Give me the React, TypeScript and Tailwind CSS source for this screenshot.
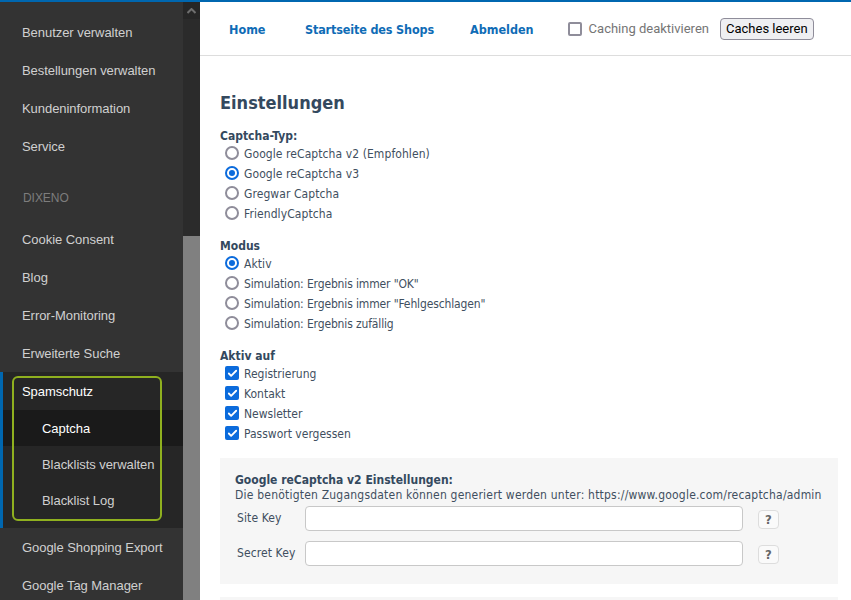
import { Check } from "lucide-react";

const topItems = ["Benutzer verwalten", "Bestellungen verwalten", "Kundeninformation", "Service"];
const dixenoItems = ["Cookie Consent", "Blog", "Error-Monitoring", "Erweiterte Suche"];
const subItems = ["Captcha", "Blacklists verwalten", "Blacklist Log"];
const bottomItems = ["Google Shopping Export", "Google Tag Manager"];

function MenuItem({ label }: { label: string }) {
  return <div className="flex h-[38px] items-center pt-[2px] pl-[22px] text-[#d0d0d0]">{label}</div>;
}

function Sidebar() {
  return <aside className="relative flex h-[598px] w-[200px] flex-none overflow-hidden bg-[#333333] font-['Liberation_Sans',sans-serif] text-[13px] tracking-[-0.05px] whitespace-nowrap">
    <div className="w-[183px] flex-none pt-[11px]">
      {topItems.map((item) => <MenuItem key={item} label={item} />)}
      <div className="flex h-[55px] items-end pb-[13px] pl-[23px] text-[12px] text-[#7d7d7d]">DIXENO</div>
      {dixenoItems.map((item) => <MenuItem key={item} label={item} />)}
      <div className="border-l-[3px] border-[#0067b0] bg-[#262626] pb-[10px]">
        <div className="flex h-[38px] items-center pt-[2px] pl-[19px] text-white">Spamschutz</div>
        {subItems.map((item, index) => <div key={item} className={`flex h-[36px] items-center pt-[2px] pl-[39px] ${index === 0 ? "bg-[#1a1a1a] text-white" : "text-[#d0d0d0]"}`}>{item}</div>)}
      </div>
      {bottomItems.map((item) => <MenuItem key={item} label={item} />)}
    </div>
    <div className="flex w-[17px] flex-none flex-col bg-[#2b2b2b]">
      <div className="flex h-[17px] items-center justify-center bg-[#262626]">
        <svg width="9" height="6" viewBox="0 0 9 6"><path d="M0.5 5 L4.5 1 L8.5 5" fill="none" stroke="#6e6e6e" strokeWidth="2" /></svg>
      </div>
      <div className="h-[217px]" />
      <div className="flex-1 bg-[#808080]" />
    </div>
    <div className="absolute top-[374px] left-[12px] h-[145px] w-[150px] rounded-[6px] border-2 border-[#8fb01f]" />
  </aside>;
}

function Radio({ label, checked, tight }: { label: string; checked?: boolean; tight?: boolean }) {
  return <label className="flex h-[20px] items-center pl-[5px]">
    <span className={`mr-[5px] flex h-[14px] w-[14px] flex-none items-center justify-center rounded-full border-2 bg-white ${checked ? "border-[#0b6bdc]" : "border-[#8f8d9a]"}`}>
      {checked && <span className="h-[6px] w-[6px] rounded-full bg-[#0b6bdc]" />}
    </span>
    <span className={`pt-[2px] ${tight ? "tracking-[-0.14px]" : "tracking-[0.08px]"}`}>{label}</span>
  </label>;
}

function Checkbox({ label }: { label: string }) {
  return <label className="flex h-[20px] items-center pl-[5px]">
    <span className="mr-[5px] flex h-[14px] w-[14px] flex-none items-center justify-center rounded-[2px] bg-[#0b6bdc]">
      <Check size={11} color="white" strokeWidth={4} />
    </span>
    <span className="pt-[2px]">{label}</span>
  </label>;
}

function KeyRow({ label }: { label: string }) {
  return <div className="flex h-[35px] items-center">
    <span className="w-[70px] flex-none pb-[1px] pl-[2px] tracking-[0.1px]">{label}</span>
    <div className="h-[25px] w-[438px] flex-none rounded-[4px] border border-[#c8c8c8] bg-white" />
    <span className="mt-[2px] ml-[15px] flex h-[19px] w-[21px] flex-none items-center justify-center rounded-[4px] border border-[#dddddd] bg-[#fafafa] text-[13px] font-bold text-[#666666]">?</span>
  </div>;
}

export default function App() {
  return <div className="h-[600px] w-[851px] overflow-hidden bg-white">
    <div className="h-[2px] bg-[#0067b0]" />
    <div className="flex">
      <Sidebar />
      <main className="min-w-0 flex-1 font-['DejaVu_Sans_Condensed','DejaVu_Sans',sans-serif] text-[12px] whitespace-nowrap text-[#3f4f60]">
        <nav className="flex h-[54px] items-center border-b border-[#dddddd] pl-[29px]">
          <a className="pt-[4px] text-[12.5px] font-bold text-[#0f6cb6]">Home</a>
          <a className="ml-[39.5px] pt-[4px] text-[12.5px] font-bold tracking-[-0.15px] text-[#0f6cb6]">Startseite des Shops</a>
          <a className="ml-[36px] pt-[4px] text-[12.5px] font-bold text-[#0f6cb6]">Abmelden</a>
          <span className="ml-[34px] h-[14px] w-[14px] rounded-[2px] border-2 border-[#8f8d9a]" />
          <span className="ml-[7px] font-['Roboto',sans-serif] text-[13px] text-[#757575]">Caching deaktivieren</span>
          <button className="ml-[11px] h-[22px] rounded-[4px] border border-[#8f8d9a] bg-[#efeff2] px-[5px] font-['Roboto',sans-serif] text-[13px] text-black">Caches leeren</button>
        </nav>
        <div className="pt-[36px] pr-[13px] pl-[20px]">
          <h1 className="text-[18px] leading-[22px] font-bold text-[#34495e]">Einstellungen</h1>
          <p className="mt-[15px] h-[14px] leading-[15px] font-bold text-[#34495e]">Captcha-Typ:</p>
          <Radio label="Google reCaptcha v2 (Empfohlen)" />
          <Radio label="Google reCaptcha v3" checked />
          <Radio label="Gregwar Captcha" />
          <Radio label="FriendlyCaptcha" />
          <p className="mt-[16px] h-[14px] leading-[15px] font-bold text-[#34495e]">Modus</p>
          <Radio label="Aktiv" checked />
          <Radio label={'Simulation: Ergebnis immer "OK"'} tight />
          <Radio label={'Simulation: Ergebnis immer "Fehlgeschlagen"'} tight />
          <Radio label="Simulation: Ergebnis zufällig" tight />
          <p className="mt-[16px] h-[14px] leading-[15px] font-bold text-[#34495e]">Aktiv auf</p>
          <Checkbox label="Registrierung" />
          <Checkbox label="Kontakt" />
          <Checkbox label="Newsletter" />
          <Checkbox label="Passwort vergessen" />
          <section className="mt-[15px] h-[126px] bg-[#f6f6f6] pt-[15px] pl-[15px]">
            <p className="h-[15px] leading-[15px] font-bold text-[#34495e]">Google reCaptcha v2 Einstellungen:</p>
            <p className="h-[13px] leading-[15px] tracking-[0.21px]">Die benötigten Zugangsdaten können generiert werden unter: https://www.google.com/recaptcha/admin</p>
            <KeyRow label="Site Key" />
            <KeyRow label="Secret Key" />
          </section>
          <div className="mt-[13px] h-[10px] bg-[#f6f6f6]" />
        </div>
      </main>
    </div>
  </div>;
}
